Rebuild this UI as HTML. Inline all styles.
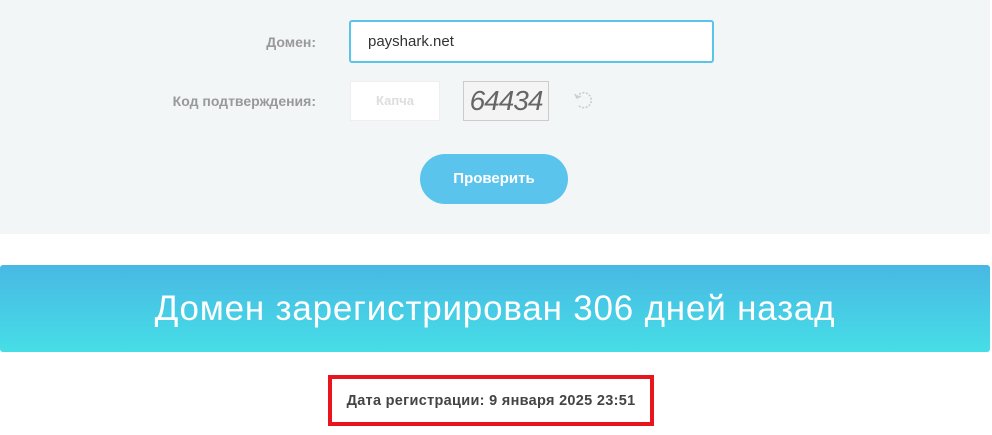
<!DOCTYPE html>
<html><head><meta charset="utf-8"><style>
body{margin:0;width:992px;height:435px;background:#fff;font-family:"Liberation Sans",sans-serif;position:relative;overflow:hidden}
.panel{position:absolute;left:0;top:0;width:990px;height:234px;background:#f3f6f7}
.lbl{position:absolute;font-size:14px;font-weight:bold;color:#999;text-align:right;right:676px}
.inp{position:absolute;left:349px;top:20px;width:361px;height:39px;border:2px solid #5bc4ec;border-radius:3px;background:#fff;box-sizing:content-box}
.inp span{position:absolute;left:17px;top:11px;font-size:15px;color:#333}
.cap{position:absolute;left:350px;top:81px;width:88px;height:38px;background:#fff;border:1px solid #eee;color:#ddd;font-size:13px;font-weight:bold;text-align:center;line-height:38px}
.img{position:absolute;left:463px;top:81px;width:84px;height:38px;background:#f4f4f4;border:1px solid #ccc;font-family:"Liberation Sans",sans-serif;font-size:28px;font-style:italic;color:#666;line-height:38px;letter-spacing:-1px;text-align:center;font-weight:normal}
.btn{position:absolute;left:420px;top:154px;width:148px;height:50px;border-radius:25px;background:#5bc4ec;color:#fff;font-weight:bold;font-size:15px;text-align:center;line-height:50px}
.ban{position:absolute;left:0;top:265px;width:990px;height:87px;background:linear-gradient(#48b8e4,#46dee6);border-radius:3px;color:#fff;font-size:35px;letter-spacing:0.8px;text-align:center;line-height:87px}
.box{position:absolute;left:328px;top:375px;width:318px;height:43px;border:4px solid #e8151d;font-size:14.5px;letter-spacing:0.3px;font-weight:bold;color:#444;text-align:center;line-height:44px}
</style></head><body>
<div class="panel"></div>
<div class="lbl" style="top:34px">Домен:</div>
<div class="inp"><span>payshark.net</span></div>
<div class="lbl" style="top:93px">Код подтверждения:</div>
<div class="cap">Капча</div>
<div class="img">64434</div>
<svg style="position:absolute;left:573px;top:89px" width="22" height="22" viewBox="0 0 22 22"><path d="M4 8 A7.5 7.5 0 1 1 5 16" fill="none" stroke="#ccc" stroke-width="1.6" stroke-dasharray="2 1.5"/><path d="M2 5 L4 9 L8 7" fill="none" stroke="#ccc" stroke-width="1.5"/></svg>
<div class="btn">Проверить</div>
<div class="ban">Домен зарегистрирован 306 дней назад</div>
<div class="box">Дата регистрации: 9 января 2025 23:51</div>
</body></html>
